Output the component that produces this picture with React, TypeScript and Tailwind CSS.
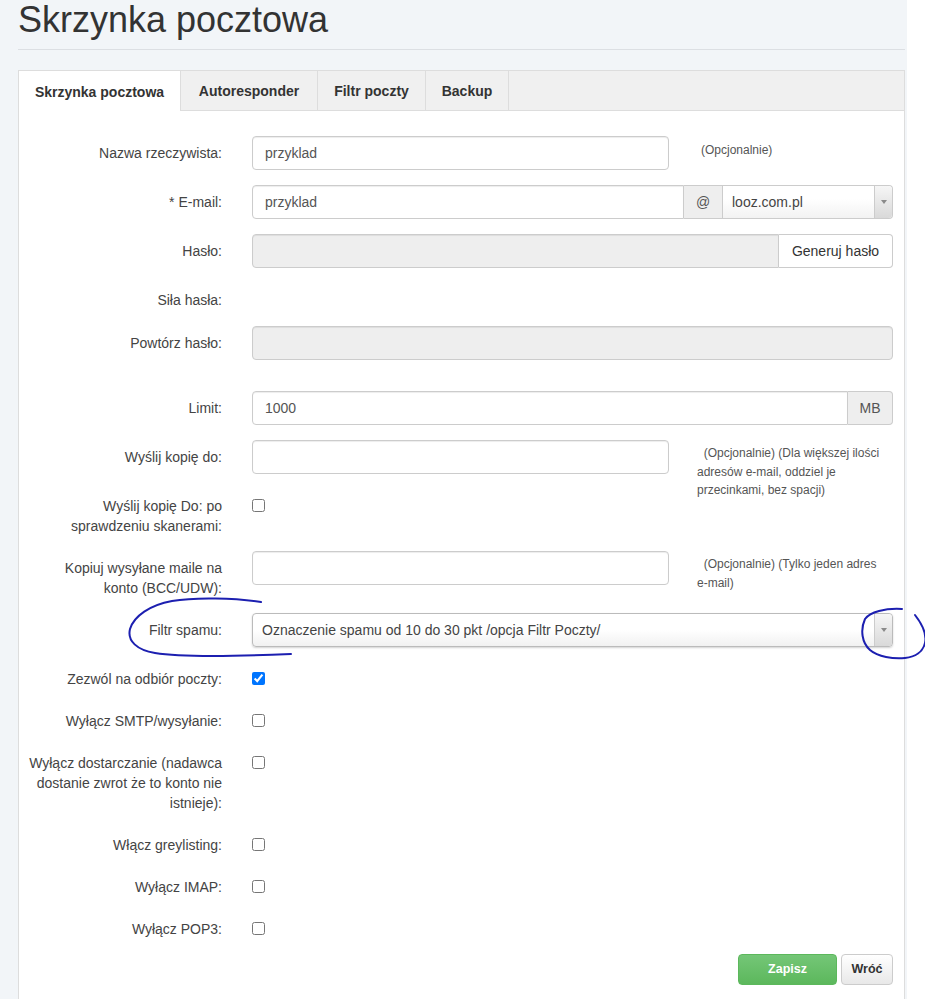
import React from 'react';

const font = "font-['Liberation_Sans',Arial,sans-serif]";

const inputCls =
    'h-[34px] border border-[#ccc] px-[12px] text-[14px] text-[#555] shadow-[inset_0_1px_1px_rgba(0,0,0,0.075)] outline-none';

const Label: React.FC<{ children: React.ReactNode }> = ({ children }) => (
    <label className="w-[203px] shrink-0 pt-[7px] text-right text-[14px] leading-[20px] text-[#444]">
        {children}
    </label>
);

const Help: React.FC<{ children: React.ReactNode; first?: boolean }> = ({ children, first }) => (
    <p
        className={`${first ? 'pl-[32px] pt-[5px]' : 'pl-[28px] pt-[4px]'} text-[12px] leading-[18.5px] text-[#555] whitespace-nowrap`}
    >
        {children}
    </p>
);

const Arrow: React.FC = () => (
    <span className="flex h-full w-[18px] items-center justify-center border-l border-[#ccc] bg-gradient-to-b from-[#f6f6f6] to-[#d9d9d9] rounded-r-[4px]">
        <svg width="6" height="4" viewBox="0 0 6 4">
            <path d="M0 0 L6 0 L3 4 Z" fill="#8a8a8a" />
        </svg>
    </span>
);

const CheckRow: React.FC<{ label: React.ReactNode; checked?: boolean }> = ({ label, checked }) => (
    <div className="flex mb-[15px]">
        <Label>{label}</Label>
        <div className="ml-[30px] pt-[10px]">
            <input type="checkbox" defaultChecked={checked} className="m-0 block w-[13px] h-[13px]" />
        </div>
    </div>
);

export default function App() {
    return (
        <div className={`relative w-[925px] min-h-[999px] bg-white ${font}`}>
            <div className="w-[907px] min-h-[999px] bg-[#f2f5f8] pl-[18px] pr-[2px] pb-[20px]">
                {/* Header */}
                <div className="h-[50px] border-b border-[#dcdfe3]">
                    <h1 className="text-[36px] leading-[40px] text-[#333]">Skrzynka pocztowa</h1>
                </div>

                {/* Panel */}
                <div className="mt-[20px] border border-[#ddd] bg-white">
                    <div className="flex h-[40px] bg-[#f0f0f0] border-b border-[#ddd]">
                        <div className="w-[162px] h-[40px] -mb-px pt-[2px] bg-white border-r border-[#ddd] flex items-center justify-center text-[14px] font-bold text-[#333]">
                            Skrzynka pocztowa
                        </div>
                        <div className="w-[137px] pt-[2px] border-r border-[#ddd] flex items-center justify-center text-[14px] font-bold text-[#333]">
                            Autoresponder
                        </div>
                        <div className="w-[108px] pt-[2px] border-r border-[#ddd] flex items-center justify-center text-[14px] font-bold text-[#333]">
                            Filtr poczty
                        </div>
                        <div className="w-[83px] pt-[2px] border-r border-[#ddd] flex items-center justify-center text-[14px] font-bold text-[#333]">
                            Backup
                        </div>
                    </div>

                    <div className="pt-[25px]">
                        {/* Nazwa */}
                        <div className="flex h-[34px] mb-[15px]">
                            <Label>Nazwa rzeczywista:</Label>
                            <div className="ml-[30px] flex">
                                <input className={`${inputCls} bg-white w-[417px] rounded-[4px]`} defaultValue="przyklad" />
                                <Help first>(Opcjonalnie)</Help>
                            </div>
                        </div>

                        {/* E-mail */}
                        <div className="flex h-[34px] mb-[15px]">
                            <Label>* E-mail:</Label>
                            <div className="ml-[30px] flex w-[641px]">
                                <input className={`${inputCls} bg-white w-[432px] rounded-l-[4px]`} defaultValue="przyklad" />
                                <span className="w-[39px] h-[34px] flex items-center justify-center bg-[#eee] border-y border-r border-[#ccc] text-[14px] text-[#555]">
                                    @
                                </span>
                                <div className="flex-1 h-[34px] flex items-center border-y border-r border-[#ccc] rounded-r-[4px] bg-gradient-to-b from-white from-40% to-[#f2f2f2]">
                                    <span className="flex-1 pl-[9px] text-[14px] text-[#444]">looz.com.pl</span>
                                    <Arrow />
                                </div>
                            </div>
                        </div>

                        {/* Hasło */}
                        <div className="flex h-[34px] mb-[15px]">
                            <Label>Hasło:</Label>
                            <div className="ml-[30px] flex w-[641px]">
                                <input disabled className={`${inputCls} flex-1 bg-[#eee] rounded-l-[4px]`} />
                                <button className="w-[114px] h-[34px] border-y border-r border-[#ccc] rounded-r-[4px] bg-white text-[14px] text-[#333]">
                                    Generuj hasło
                                </button>
                            </div>
                        </div>

                        {/* Siła hasła */}
                        <div className="flex mb-[16px]">
                            <Label>Siła hasła:</Label>
                        </div>

                        {/* Powtórz hasło */}
                        <div className="flex h-[34px] mb-[31px]">
                            <Label>Powtórz hasło:</Label>
                            <div className="ml-[30px]">
                                <input disabled className={`${inputCls} w-[641px] bg-[#eee] rounded-[4px]`} />
                            </div>
                        </div>

                        {/* Limit */}
                        <div className="flex h-[34px] mb-[15px]">
                            <Label>Limit:</Label>
                            <div className="ml-[30px] flex w-[641px]">
                                <input className={`${inputCls} bg-white flex-1 rounded-l-[4px]`} defaultValue="1000" />
                                <span className="w-[45px] h-[34px] flex items-center justify-center bg-[#eee] border-y border-r border-[#ccc] rounded-r-[4px] text-[14px] text-[#555]">
                                    MB
                                </span>
                            </div>
                        </div>

                        {/* Wyślij kopię do */}
                        <div className="flex h-[34px] mb-[15px]">
                            <Label>Wyślij kopię do:</Label>
                            <div className="ml-[30px] flex">
                                <input className={`${inputCls} bg-white w-[417px] rounded-[4px]`} />
                                <Help>
                                    &nbsp;&nbsp;(Opcjonalnie) (Dla większej ilości
                                    <br />
                                    adresów e-mail, oddziel je
                                    <br />
                                    przecinkami, bez spacji)
                                </Help>
                            </div>
                        </div>

                        <CheckRow
                            label={
                                <>
                                    Wyślij kopię Do: po
                                    <br />
                                    sprawdzeniu skanerami:
                                </>
                            }
                        />

                        {/* Kopiuj BCC */}
                        <div className="flex mb-[15px]">
                            <Label>
                                Kopiuj wysyłane maile na
                                <br />
                                konto (BCC/UDW):
                            </Label>
                            <div className="ml-[30px] flex h-[34px]">
                                <input className={`${inputCls} bg-white w-[417px] rounded-[4px]`} />
                                <Help>
                                    &nbsp;&nbsp;(Opcjonalnie) (Tylko jeden adres
                                    <br />
                                    e-mail)
                                </Help>
                            </div>
                        </div>

                        {/* Filtr spamu */}
                        <div className="flex h-[34px] mb-[15px]">
                            <Label>Filtr spamu:</Label>
                            <div className="ml-[30px] w-[641px] h-[34px] flex items-center border border-[#bbb] rounded-[4px] shadow-[0_1px_2px_rgba(0,0,0,0.18)] bg-gradient-to-b from-white from-50% to-[#f1f1f1]">
                                <span className="flex-1 pl-[9px] text-[14px] text-[#444]">
                                    Oznaczenie spamu od 10 do 30 pkt /opcja Filtr Poczty/
                                </span>
                                <Arrow />
                            </div>
                        </div>

                        <CheckRow label="Zezwól na odbiór poczty:" checked />
                        <CheckRow label="Wyłącz SMTP/wysyłanie:" />
                        <CheckRow
                            label={
                                <>
                                    Wyłącz dostarczanie (nadawca
                                    <br />
                                    dostanie zwrot że to konto nie
                                    <br />
                                    istnieje):
                                </>
                            }
                        />
                        <CheckRow label="Włącz greylisting:" />
                        <CheckRow label="Wyłącz IMAP:" />
                        <CheckRow label="Wyłącz POP3:" />

                        {/* Buttons */}
                        <div className="flex pb-[20px]">
                            <div className="w-[233px] shrink-0" />
                            <div className="w-[641px] flex justify-end gap-[4px]">
                                <button className="w-[99px] h-[31px] rounded-[4px] border border-[#5cb85c] bg-gradient-to-b from-[#74c677] to-[#5cb85c] text-[12.5px] font-bold text-white">
                                    Zapisz
                                </button>
                                <button className="w-[52px] h-[31px] rounded-[4px] border border-[#ccc] bg-gradient-to-b from-white to-[#e8e8e8] text-[12.5px] font-bold text-[#333]">
                                    Wróć
                                </button>
                            </div>
                        </div>
                    </div>
                </div>
            </div>

            {/* Pen annotations */}
            <svg
                className="pointer-events-none absolute left-0 top-0"
                width="925"
                height="999"
                viewBox="0 0 925 999"
                fill="none"
            >
                <path
                    d="M261 602 C235 598 195 597 172 601 C150 605 134 616 130 629 C127 641 137 650 155 653 C185 658 245 656 291 654"
                    stroke="#1c1fb0"
                    strokeWidth="2"
                    strokeLinecap="round"
                />
                <path
                    d="M915 615 C922 624 927 634 925 643 C923 652 915 657 905 658 C893 659 878 657 870 650 C862 643 860 630 865 619 C870 612 885 608 902 609"
                    stroke="#1c1fb0"
                    strokeWidth="2"
                    strokeLinecap="round"
                />
            </svg>
        </div>
    );
}
